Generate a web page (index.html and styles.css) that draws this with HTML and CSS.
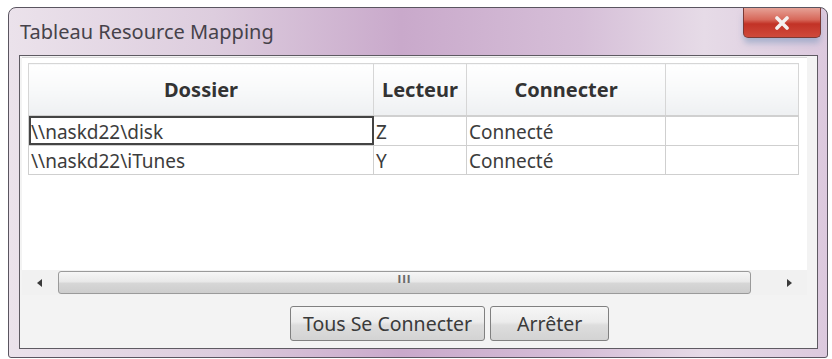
FILE: index.html
```html
<!DOCTYPE HTML>
<html>

    <head>
        <meta name="viewport" content="width=device-width, initial-scale=1">
        <title>Tableau Resource Mapping</title>
        <link rel="stylesheet" href="styles.css">
    </head>

    <body>
        <div class="window">
            <div class="titlebar">
                <span class="title">Tableau Resource Mapping</span>
                <div class="close">
                    <svg width="16" height="14" viewBox="0 0 16 14">
                        <path d="M3 2 L13 12 M13 2 L3 12" stroke="#f4f0f0" stroke-width="3.6" stroke-linecap="round" />
                    </svg>
                </div>
            </div>
            <div class="client">
                <div class="listview">
                    <div class="listarea">
                        <table class="grid">
                            <colgroup>
                                <col class="c-dossier">
                                <col class="c-lecteur">
                                <col class="c-connecter">
                                <col class="c-extra">
                            </colgroup>
                            <thead>
                                <tr>
                                    <th>Dossier</th>
                                    <th>Lecteur</th>
                                    <th>Connecter</th>
                                    <th></th>
                                </tr>
                            </thead>
                            <tbody>
                                <tr>
                                    <td class="focus">\\naskd22\disk</td>
                                    <td>Z</td>
                                    <td>Connecté</td>
                                    <td></td>
                                </tr>
                                <tr>
                                    <td>\\naskd22\iTunes</td>
                                    <td>Y</td>
                                    <td>Connecté</td>
                                    <td></td>
                                </tr>
                            </tbody>
                        </table>
                    </div>
                    <div class="hscroll">
                        <span class="arrow left"></span>
                        <div class="thumb"><span class="grip">III</span></div>
                        <span class="arrow right"></span>
                    </div>
                </div>
                <div class="actions">
                    <button class="button">Tous Se Connecter</button>
                    <button class="button">Arrêter</button>
                </div>
            </div>
        </div>
    </body>

</html>
```

FILE: styles.css
```css
* {
    box-sizing: border-box;
}

html {
    font-family: "Noto Sans", "Open Sans", Arial, sans-serif;
}

body {
    margin: 0;
    background: #ffffff;
    color: #3a3a3a;
}

.window {
    width: 820px;
    height: 351px;
    margin: 7px 0 0 8px;
    border: 1px solid #5a5560;
    border-radius: 8px 8px 3px 3px;
    background: linear-gradient(90deg, #ebe2eb 0%, #ddcdde 25%, #c9a9cb 48%, #d6bfd8 70%, #e6dbe7 85%, #dcc9de 100%);
    padding: 0 9px 8px 10px;
    display: flex;
    flex-direction: column;
}

.titlebar {
    height: 47px;
    flex: none;
    display: flex;
    align-items: flex-start;
    justify-content: space-between;
}

.title {
    font-size: 20px;
    color: #46424a;
    margin: 10px 0 0 1px;
}

.close {
    width: 78px;
    height: 30px;
    margin-right: -3px;
    border: 1px solid #7a3a36;
    border-top: none;
    border-radius: 0 0 5px 5px;
    background: linear-gradient(180deg, #e6a196 0%, #d7685a 40%, #c23226 55%, #cf4a3b 100%);
    box-shadow: 0 6px 6px -1px rgba(120, 150, 185, 0.55);
    display: flex;
    align-items: center;
    justify-content: center;
}

.client {
    flex: 1;
    border: 1px solid #5e5a62;
    background: #f3f3f3;
    display: flex;
    flex-direction: column;
}

.listview {
    margin: 1px 10px 0 2px;
    background: #ffffff;
    border-top: 1px solid #d8d8d8;
    display: flex;
    flex-direction: column;
    height: 238px;
    flex: none;
}

.listarea {
    flex: 1;
    padding: 5px 0 0 6px;
}

.grid {
    border-collapse: collapse;
    table-layout: fixed;
    width: 770px;
}

.c-dossier {
    width: 345px;
}

.c-lecteur {
    width: 93px;
}

.c-connecter {
    width: 199px;
}

.c-extra {
    width: 133px;
}

.grid th {
    height: 52px;
    font-size: 20px;
    font-weight: bold;
    color: #333333;
    background: linear-gradient(180deg, #ffffff 0%, #f7f8f9 55%, #eef0f2 100%);
    border: 1px solid #d6d6d6;
    border-bottom: 2px solid #d0d0d0;
    padding: 0;
    text-align: center;
}

.grid td {
    height: 29px;
    font-size: 19px;
    line-height: 26px;
    color: #3c3c3c;
    border: 1px solid #cfcfcf;
    padding: 2px 0 0 2px;
    white-space: nowrap;
    overflow: hidden;
}

.grid td.focus {
    outline: 2px solid #444444;
    outline-offset: -2px;
}

.hscroll {
    height: 25px;
    flex: none;
    background: #f1f1f1;
    display: flex;
    align-items: center;
    padding: 0 15px;
}

.arrow {
    width: 0;
    height: 0;
    border-top: 4px solid transparent;
    border-bottom: 4px solid transparent;
}

.arrow.left {
    border-right: 5px solid #3a3a3a;
    margin-right: 16px;
}

.arrow.right {
    border-left: 5px solid #3a3a3a;
    margin-left: 36px;
}

.thumb {
    flex: 1;
    height: 23px;
    border: 1px solid #9a9a9a;
    border-radius: 3px;
    background: linear-gradient(180deg, #f6f6f6 0%, #e9e9e9 45%, #d6d6d6 55%, #cdcdcd 100%);
    display: flex;
    justify-content: center;
    align-items: flex-start;
}

.grip {
    font-size: 10px;
    font-weight: bold;
    font-family: "DejaVu Sans", sans-serif;
    color: #6a6a6a;
    margin-top: 2px;
    letter-spacing: 1px;
}

.actions {
    flex: 1;
    display: flex;
    justify-content: center;
    align-items: flex-start;
    gap: 5px;
    padding: 11px 0 0 62px;
}

.button {
    height: 35px;
    font-family: "Noto Sans", "Open Sans", Arial, sans-serif;
    font-size: 19.5px;
    color: #3a3a3a;
    border: 1px solid #808080;
    border-radius: 3px;
    background: linear-gradient(180deg, #f6f6f6 0%, #ececec 45%, #dddddd 55%, #d3d3d3 100%);
    padding: 0 12px;
}

.button + .button {
    width: 119px;
}
```
